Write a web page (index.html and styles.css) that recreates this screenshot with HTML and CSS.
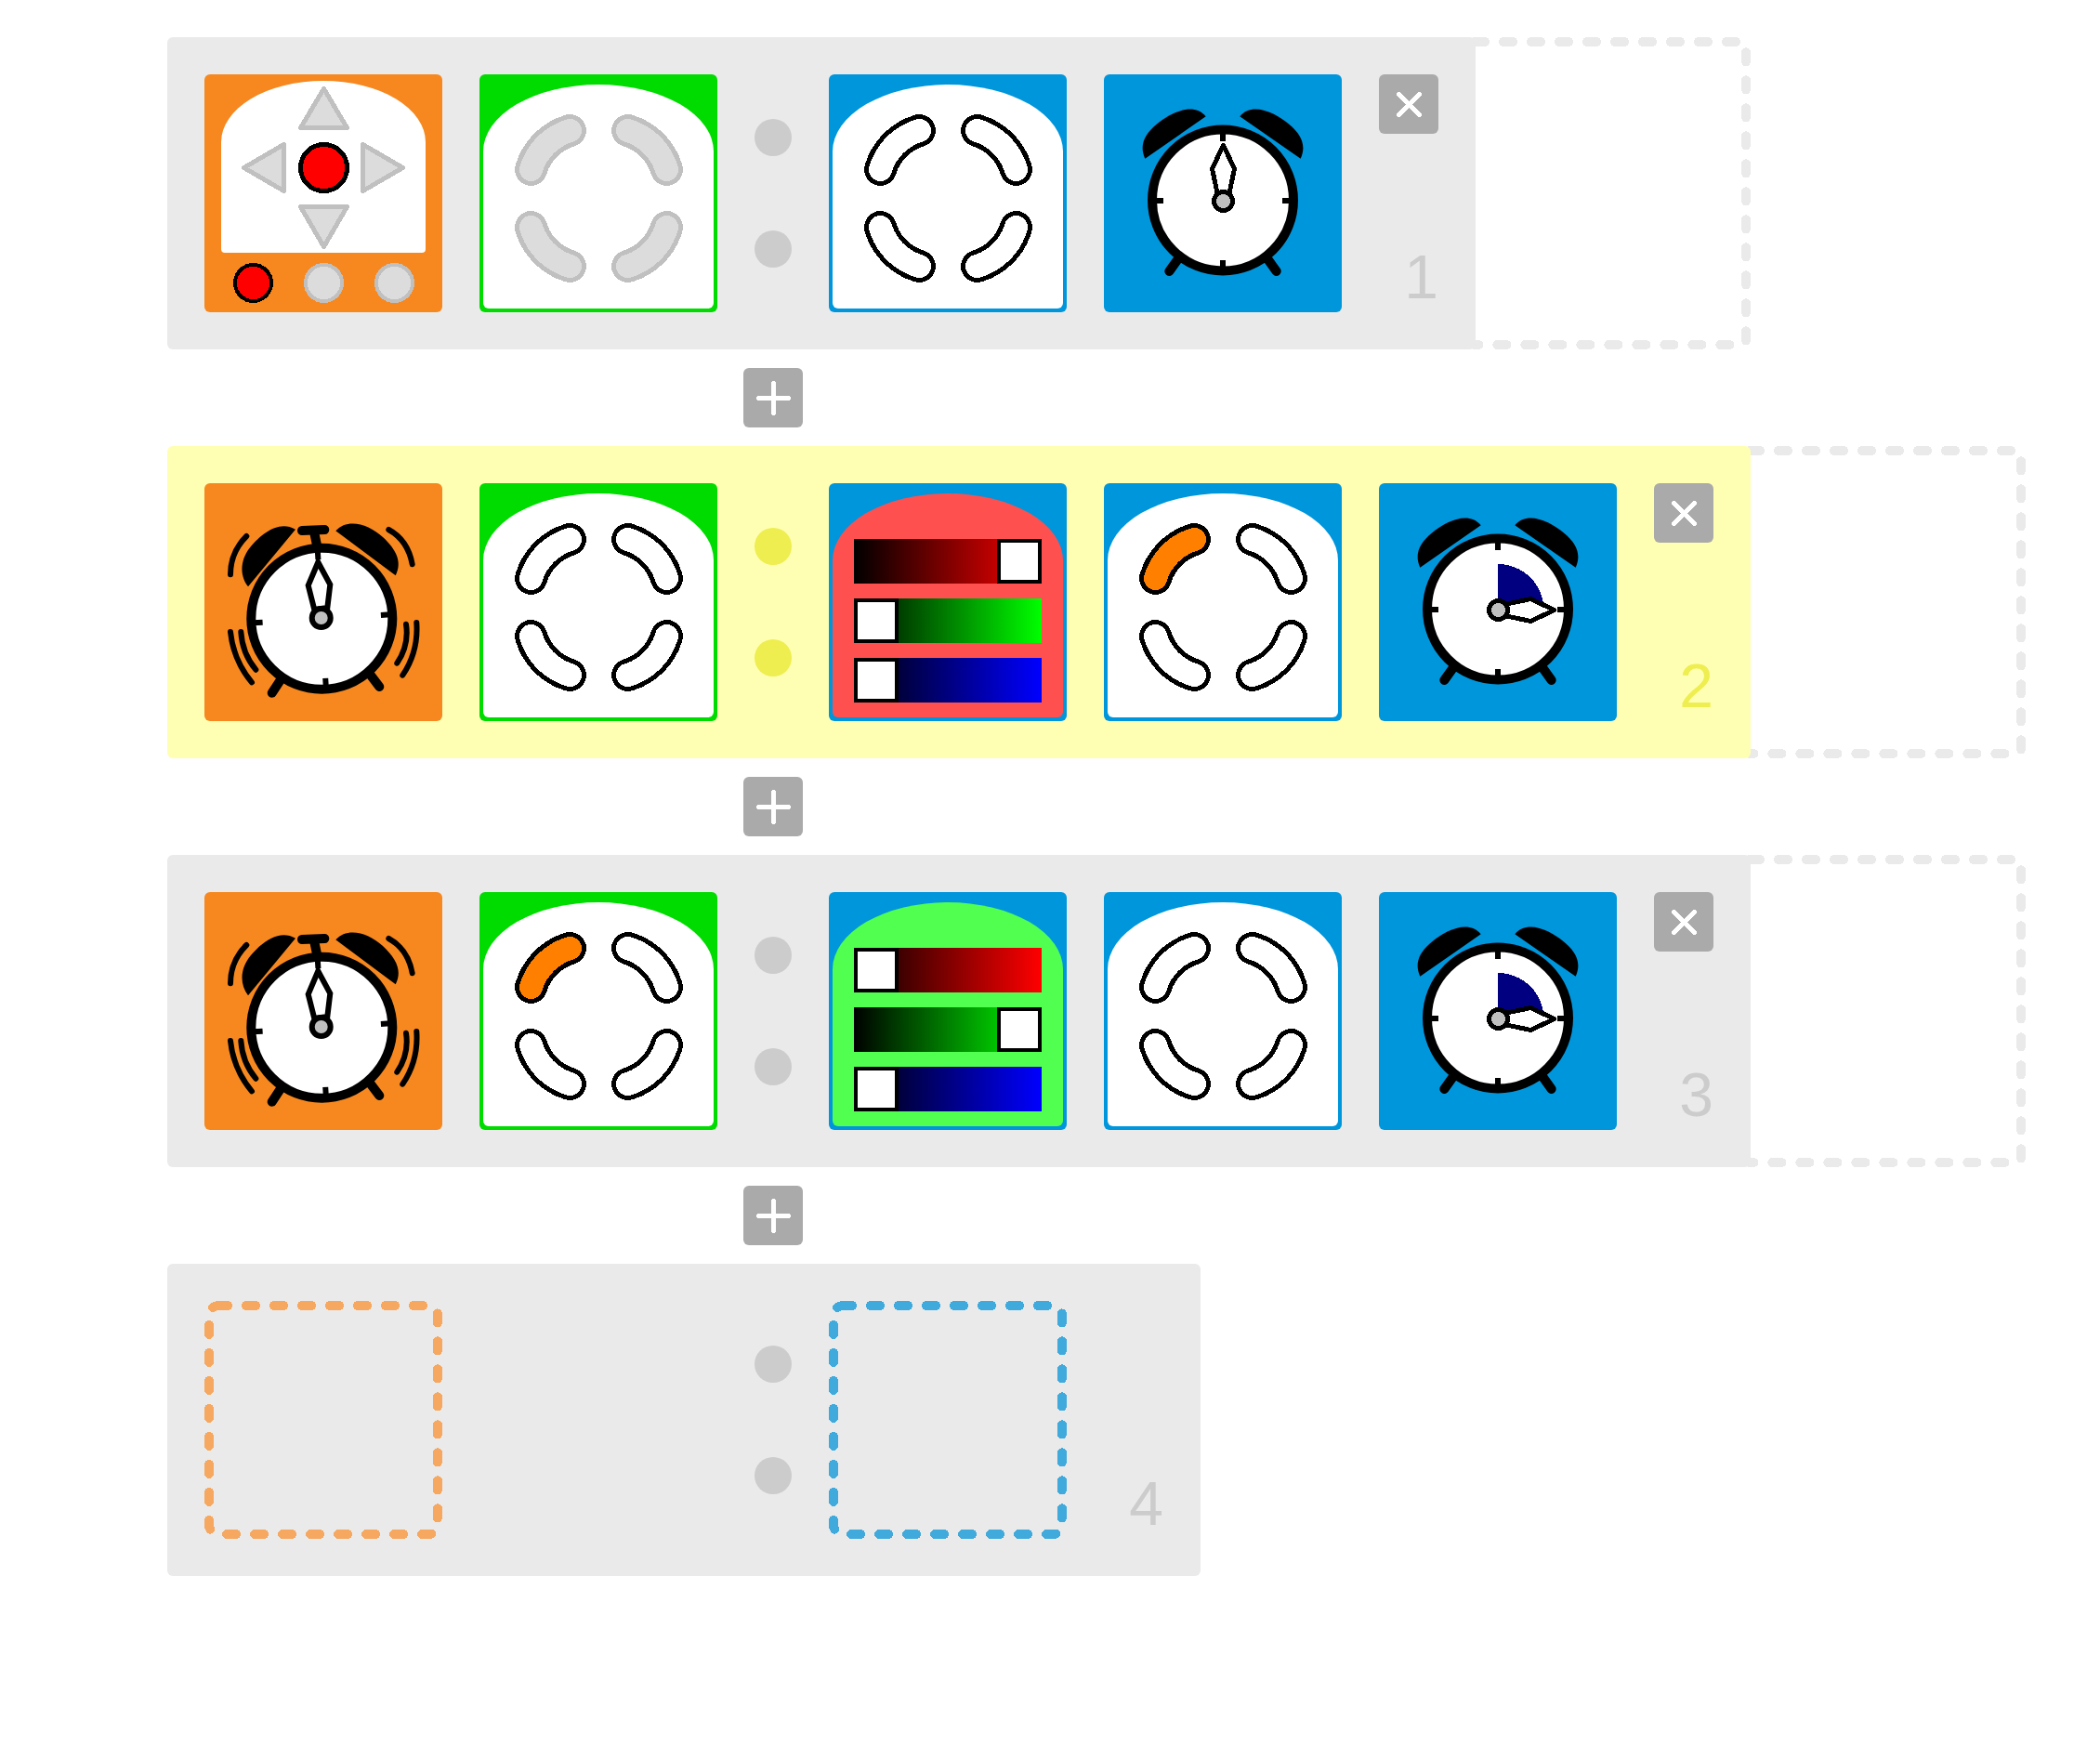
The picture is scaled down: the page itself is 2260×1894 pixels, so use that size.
FILE: index.html
```
<!DOCTYPE html>
<html lang="en">
<head>
<meta charset="utf-8">
<meta name="viewport" content="width=device-width, initial-scale=1">
<title>Visual program</title>
<link rel="stylesheet" href="styles.css">
</head>
<body>
<svg class="sprites" aria-hidden="true">
  <defs>
    <symbol id="arcs" viewBox="0 0 256 256">
      <g id="arc">
        <path class="rim" d="M55.500 102.500A62 62 0 0 1 97.500 60.500"/>
        <path class="fill" d="M55.500 102.500A62 62 0 0 1 97.500 60.500"/>
      </g>
      <use href="#arc" transform="translate(257 0) scale(-1 1)"/>
      <use href="#arc" transform="translate(0 267) scale(1 -1)"/>
      <use href="#arc" transform="translate(257 267) scale(-1 -1)"/>
    </symbol>
    <symbol id="clock" viewBox="0 0 256 256">
      <path d="M81 197L70.300 212M175 197l10.700 15" fill="none" stroke="#000" stroke-width="10" stroke-linecap="round"/>
      <path d="M44.300 90.700C38 77 43 65 57 53.500S96 29 109.700 45.300ZM211.700 90.700C218 77 213 65 199 53.500S160 29 146.300 45.300Z"/>
      <circle cx="128" cy="135.500" r="76" fill="#fff" stroke="#000" stroke-width="10"/>
      <path d="M128 62v10M128 200v10M54 136h10M192 136h10" stroke="#000" stroke-width="6"/>
    </symbol>
    <symbol id="hand" viewBox="0 0 256 256">
      <path d="M122.500 130L116.500 101.500 128.500 76.500 140.500 101.500 134.500 130Z" fill="#fff" stroke="#000" stroke-width="5" stroke-linejoin="round"/>
      <circle cx="128.500" cy="136.500" r="10" fill="#c0c0c0" stroke="#000" stroke-width="5"/>
    </symbol>
    <symbol id="ringing" viewBox="0 0 256 256">
      <g fill="none" stroke="#000" stroke-linecap="round">
        <path stroke-width="10" d="M81.700 212L72.700 225.700M179 206.700l9.300 12.300M105 51l24.300-1"/>
        <path stroke-width="6" d="M45.300 57Q28 74 28 98.300M198.300 50Q219 61.300 223.700 87.300M28 160Q31 190 51 214.300M39.300 160Q40.700 183 55.300 200.700M228.300 150Q230.500 181 213.300 206.700M217 151.700Q220.500 174 207.300 193.700"/>
      </g>
      <path d="M118 52L121.700 70" stroke="#000" stroke-width="10"/>
      <path d="M47 111.300C37 98 39 81 50 68S80 39 98 49.700ZM141.300 51.300C154 37 177 44 192 58S213 85 205.700 99.300Z"/>
      <circle cx="126.300" cy="145.800" r="76" fill="#fff" stroke="#000" stroke-width="10"/>
      <path transform="rotate(-3.500 126.300 145.800)" d="M126.300 72v10M126.300 210v10M52 145.800h10.500M190 145.800h10" stroke="#000" stroke-width="6"/>
      <path d="M118.300 136L111.700 110 122.300 85 135.300 109 132.300 134Z" fill="#fff" stroke="#000" stroke-width="6"/>
      <circle cx="125.700" cy="145" r="10" fill="#c0c0c0" stroke="#000" stroke-width="6"/>
    </symbol>
    <symbol id="plus" viewBox="0 0 64 64">
      <path d="M32.500 16.500v32M16.500 32.500h32" stroke="#fff" stroke-width="5" stroke-linecap="round"/>
    </symbol>
    <symbol id="cross" viewBox="0 0 64 64">
      <path d="M21.500 21.500l22 22M43.500 21.500l-22 22" stroke="#fff" stroke-width="5" stroke-linecap="round"/>
    </symbol>
    <symbol id="drop" viewBox="0 0 306 336">
      <rect x="5" y="5" width="296" height="326" rx="5"/>
    </symbol>
    <symbol id="slot" viewBox="0 0 256 256">
      <rect x="5" y="5" width="246" height="246" rx="10"/>
    </symbol>
  </defs>
</svg>

<main class="program">
  <section class="rule" aria-label="Rule 1">
    <div class="panel">
      <div class="tile event">
        <div class="face remote"></div>
        <svg class="art crisp" viewBox="0 0 256 256" role="img" aria-label="Remote buttons">
          <g class="off" stroke-width="5" stroke-linejoin="round">
            <path d="M128.500 15.500L153.500 57.500H103.500Z"/>
            <path d="M128.500 185.500L153.500 142.500H103.500Z"/>
            <path d="M42.500 100.500L85.500 75.500V125.500Z"/>
            <path d="M213.500 100.500L170.500 75.500V125.500Z"/>
          </g>
          <circle class="on" cx="128.500" cy="100.500" r="25" stroke-width="5"/>
          <circle class="on" cx="52.500" cy="224.500" r="19.500" stroke-width="4"/>
          <circle class="off" cx="128.500" cy="224.500" r="19.500" stroke-width="4"/>
          <circle class="off" cx="204.500" cy="224.500" r="19.500" stroke-width="4"/>
        </svg>
      </div>
      <div class="tile state">
        <div class="face"></div>
        <svg class="art crisp arcs dim" role="img" aria-label="State condition"><use href="#arcs"/></svg>
      </div>
      <div class="dots"><i></i><i></i></div>
      <div class="tile action">
        <div class="face"></div>
        <svg class="art crisp arcs" role="img" aria-label="Set state"><use href="#arcs"/></svg>
      </div>
      <div class="tile action">
        <svg class="art" role="img" aria-label="Start timer"><use href="#clock"/></svg>
        <svg class="art crisp" aria-hidden="true"><use href="#hand"/></svg>
      </div>
      <div class="side">
        <button class="tool" type="button" aria-label="Remove rule 1"><svg class="crisp"><use href="#cross"/></svg></button>
        <span class="number">1</span>
      </div>
    </div>
    <svg class="drop crisp" aria-hidden="true"><use href="#drop"/></svg>
  </section>

  <div class="insert"><button class="tool" type="button" aria-label="Insert rule"><svg class="crisp"><use href="#plus"/></svg></button></div>

  <section class="rule active" aria-label="Rule 2">
    <div class="panel">
      <div class="tile event"><svg class="art" role="img" aria-label="Timer elapsed"><use href="#ringing"/></svg></div>
      <div class="tile state">
        <div class="face"></div>
        <svg class="art crisp arcs" role="img" aria-label="State condition"><use href="#arcs"/></svg>
      </div>
      <div class="dots"><i></i><i></i></div>
      <div class="tile action">
        <div class="face sliders light-red">
          <input class="red" type="range" min="0" max="32" value="32" aria-label="Red">
          <input class="green" type="range" min="0" max="32" value="0" aria-label="Green">
          <input class="blue" type="range" min="0" max="32" value="0" aria-label="Blue">
        </div>
      </div>
      <div class="tile action">
        <div class="face"></div>
        <svg class="art crisp arcs" role="img" aria-label="Set state"><use href="#arcs"/></svg>
        <svg class="art crisp arcs lit" viewBox="0 0 256 256" aria-hidden="true"><use href="#arc"/></svg>
      </div>
      <div class="tile action">
        <svg class="art" role="img" aria-label="Start timer"><use href="#clock"/></svg>
        <svg class="art crisp" viewBox="0 0 256 256" aria-hidden="true">
          <path d="M128 136.500V87A49.500 49.500 0 0 1 177.500 136.500Z" fill="#000080"/>
          <use href="#hand" transform="rotate(90 128.500 136.500)"/>
        </svg>
      </div>
      <div class="side">
        <button class="tool" type="button" aria-label="Remove rule 2"><svg class="crisp"><use href="#cross"/></svg></button>
        <span class="number">2</span>
      </div>
    </div>
    <svg class="drop crisp" aria-hidden="true"><use href="#drop"/></svg>
  </section>

  <div class="insert"><button class="tool" type="button" aria-label="Insert rule"><svg class="crisp"><use href="#plus"/></svg></button></div>

  <section class="rule" aria-label="Rule 3">
    <div class="panel">
      <div class="tile event"><svg class="art" role="img" aria-label="Timer elapsed"><use href="#ringing"/></svg></div>
      <div class="tile state">
        <div class="face"></div>
        <svg class="art crisp arcs" role="img" aria-label="State condition"><use href="#arcs"/></svg>
        <svg class="art crisp arcs lit" viewBox="0 0 256 256" aria-hidden="true"><use href="#arc"/></svg>
      </div>
      <div class="dots"><i></i><i></i></div>
      <div class="tile action">
        <div class="face sliders light-green">
          <input class="red" type="range" min="0" max="32" value="0" aria-label="Red">
          <input class="green" type="range" min="0" max="32" value="32" aria-label="Green">
          <input class="blue" type="range" min="0" max="32" value="0" aria-label="Blue">
        </div>
      </div>
      <div class="tile action">
        <div class="face"></div>
        <svg class="art crisp arcs" role="img" aria-label="Set state"><use href="#arcs"/></svg>
      </div>
      <div class="tile action">
        <svg class="art" role="img" aria-label="Start timer"><use href="#clock"/></svg>
        <svg class="art crisp" viewBox="0 0 256 256" aria-hidden="true">
          <path d="M128 136.500V87A49.500 49.500 0 0 1 177.500 136.500Z" fill="#000080"/>
          <use href="#hand" transform="rotate(90 128.500 136.500)"/>
        </svg>
      </div>
      <div class="side">
        <button class="tool" type="button" aria-label="Remove rule 3"><svg class="crisp"><use href="#cross"/></svg></button>
        <span class="number">3</span>
      </div>
    </div>
    <svg class="drop crisp" aria-hidden="true"><use href="#drop"/></svg>
  </section>

  <div class="insert"><button class="tool" type="button" aria-label="Insert rule"><svg class="crisp"><use href="#plus"/></svg></button></div>

  <section class="rule" aria-label="Rule 4">
    <div class="panel">
      <div class="tile"><svg class="art crisp slot event-slot" role="img" aria-label="Event slot"><use href="#slot"/></svg></div>
      <div class="tile"></div>
      <div class="dots"><i></i><i></i></div>
      <div class="tile"><svg class="art crisp slot action-slot" role="img" aria-label="Action slot"><use href="#slot"/></svg></div>
      <div class="side"><span class="number">4</span></div>
    </div>
  </section>
</main>
</body>
</html>
```

FILE: styles.css
```
:root {
  --tile: 256px;
  --gap: 40px;
  --tool: 64px;
  --panel: #eaeaea;
  --mark: #cccccc;
}

* {
  box-sizing: border-box;
}

body {
  margin: 0;
  background: #fff;
  font-family: "Liberation Sans", Arial, sans-serif;
}

.sprites {
  position: absolute;
  width: 0;
  height: 0;
}

.program {
  display: flex;
  flex-direction: column;
  gap: 20px;
  padding: 40px 0 40px 180px;
}

.rule {
  display: flex;
}

.rule.active {
  --panel: #ffffb3;
  --mark: #eeee50;
}

.panel {
  position: relative;
  z-index: 1;
  display: flex;
  flex: none;
  gap: var(--gap);
  padding: var(--gap);
  border-radius: 6px;
  background: var(--panel);
}

.tile {
  display: grid;
  flex: none;
  width: var(--tile);
  height: var(--tile);
  border-radius: 6px;
}

.tile > * {
  grid-area: 1 / 1;
}

.event {
  background: #f6881f;
}

.state {
  background: #00dc00;
}

.action {
  background: #0096dc;
}

.face {
  margin: 11px 4px 4px;
  border-radius: 124px 124px 6px 6px / 72px 72px 6px 6px;
  background: #fff;
}

.face.remote {
  margin: 7px 18px 64px;
  border-radius: 110px 110px 4px 4px / 66px 66px 4px 4px;
}

.art {
  width: 100%;
  height: 100%;
}

.crisp {
  shape-rendering: crispEdges;
}

.on {
  fill: #ff0000;
  stroke: #000;
}

.off {
  fill: #dcdcdc;
  stroke: #c0c0c0;
}

.arcs {
  --rim: #000;
  --core: #fff;
  fill: none;
  stroke-linecap: round;
}

.arcs.dim {
  --rim: #c0c0c0;
  --core: #dcdcdc;
}

.arcs.lit {
  --core: #ff8000;
}

.rim {
  stroke: var(--rim);
  stroke-width: 35px;
}

.fill {
  stroke: var(--core);
  stroke-width: 25px;
}

.sliders {
  display: flex;
  flex-direction: column;
  gap: 16px;
  padding: 49px 23px 0;
}

.light-red {
  background: #ff5050;
}

.light-green {
  background: #50ff50;
}

.sliders input {
  appearance: none;
  display: block;
  width: 100%;
  height: 48px;
  margin: 0;
  background: linear-gradient(to right, #000, var(--channel));
}

.sliders input::-webkit-slider-thumb {
  appearance: none;
  width: 48px;
  height: 48px;
  border: 4px solid #000;
  border-radius: 0;
  background: #fff;
}

.red {
  --channel: #f00;
}

.green {
  --channel: #0f0;
}

.blue {
  --channel: #00f;
}

.dots {
  display: flex;
  flex-direction: column;
  justify-content: center;
  gap: 80px;
}

.dots i {
  width: 40px;
  height: 40px;
  border-radius: 50%;
  background: var(--mark);
}

.side {
  display: flex;
  flex-direction: column;
  align-items: flex-end;
  width: var(--tool);
}

.number {
  margin-top: auto;
  color: var(--mark);
  font-size: 66px;
  line-height: 76px;
}

.tool {
  width: var(--tool);
  height: var(--tool);
  padding: 0;
  border: 0;
  border-radius: 6px;
  background: #aaaaaa;
  cursor: pointer;
}

.tool svg {
  display: block;
  width: 100%;
  height: 100%;
}

.insert {
  padding-left: calc(2 * var(--tile) + 3 * var(--gap) - 12px);
}

.insert .tool {
  display: block;
}

.drop {
  flex: none;
  width: 306px;
  height: 336px;
  margin-left: -10px;
  fill: none;
  stroke: #eaeaea;
  stroke-width: 10px;
  stroke-linecap: round;
  stroke-dasharray: 10 20;
}

.slot {
  fill: none;
  stroke-width: 10px;
  stroke-linecap: round;
  stroke-dasharray: 10 20;
}

.event-slot {
  stroke: #f6a860;
}

.action-slot {
  stroke: #41aadc;
}
```
